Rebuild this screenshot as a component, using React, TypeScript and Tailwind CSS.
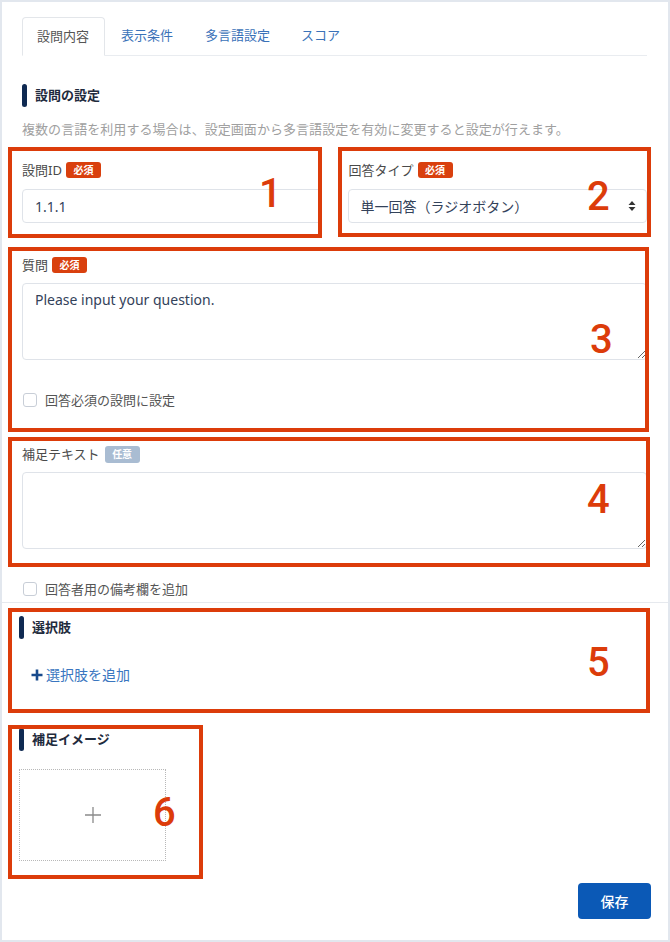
import React from "react";

const RED = "#dc3c0a";

function Badge({ kind }: { kind: "req" | "opt" }) {
  return kind === "req" ? (
    <span className="ml-[4px] inline-flex h-[16px] w-[35px] items-center justify-center rounded-[3px] bg-[#d9400e] text-[10px] font-bold leading-none text-white">
      必須
    </span>
  ) : (
    <span className="ml-[5px] inline-flex h-[17px] w-[35px] items-center justify-center rounded-[3px] bg-[#a9bcd2] text-[10px] font-bold leading-none text-white">
      任意
    </span>
  );
}

function Label({ text, kind }: { text: string; kind: "req" | "opt" }) {
  return (
    <div className="flex h-[16px] items-center text-[13px] leading-none text-[#4a4a4a]">
      <span>{text}</span>
      <Badge kind={kind} />
    </div>
  );
}

function Check({ text }: { text: string }) {
  return (
    <div className="flex h-[16px] items-center">
      <span className="ml-[1px] h-[14px] w-[14px] rounded-[3px] border border-[#c8ced7] bg-white" />
      <span className="ml-[8px] text-[13px] leading-none text-[#555]">{text}</span>
    </div>
  );
}

function Header({ text }: { text: string }) {
  return (
    <div className="flex h-[24px] items-center">
      <span className="h-[23px] w-[5px] rounded-full bg-[#0f2a52]" />
      <span className="ml-[8px] text-[13px] font-bold leading-none text-[#1f2b3d]">{text}</span>
    </div>
  );
}

function Box({ l, t, w, h }: { l: number; t: number; w: number; h: number }) {
  return (
    <div
      className="pointer-events-none absolute border-[4px]"
      style={{ left: l, top: t, width: w, height: h, borderColor: RED }}
    />
  );
}

function Num({ n, l, t }: { n: string; l: number; t: number }) {
  return (
    <div
      className="pointer-events-none absolute font-['Roboto',sans-serif] text-[40px] font-medium leading-none"
      style={{ left: l, top: t, color: RED }}
    >
      {n}
    </div>
  );
}

export default function App() {
  return (
    <div className="relative h-[942px] w-[670px] overflow-hidden bg-white font-['Noto_Sans','Noto_Sans_CJK_JP',sans-serif]">
      <div className="flex h-full flex-col border-2 border-[#e2e7ee]">
        {/* section 1 */}
        <div className="pl-[20px] pr-[21px] pt-[15px]">
          {/* tabs */}
          <div className="flex h-[39px] border-b border-[#e9ecf0] text-[13px]">
            <div className="-mb-px flex items-center rounded-t-[4px] border border-[#e3e6ea] border-b-white bg-white px-[15px] pl-[14px] text-[#555]">
              設問内容
            </div>
            <div className="flex items-center pl-[16px] pr-[16px] text-[#3a72b8]">表示条件</div>
            <div className="flex items-center px-[16px] text-[#3a72b8]">多言語設定</div>
            <div className="flex items-center px-[15px] text-[#3a72b8]">スコア</div>
          </div>

          <div className="mt-[27px]">
            <Header text="設問の設定" />
          </div>
          <div className="mt-[12px] text-[13px] leading-[20px] tracking-[0.05px] text-[#a0a0a0]">
            複数の言語を利用する場合は、設定画面から多言語設定を有効に変更すると設定が行えます。
          </div>

          <div className="mt-[23px] grid grid-cols-2 gap-[26px]">
            <div>
              <Label text="設問ID" kind="req" />
              <div className="mt-[11px] flex h-[34px] items-center rounded-[4px] border border-[#dfe3e9] px-[12px] text-[14px] text-[#33425a]">
                1.1.1
              </div>
            </div>
            <div>
              <div className="pl-[1px]">
                <Label text="回答タイプ" kind="req" />
              </div>
              <div className="mt-[11px] flex h-[34px] items-center justify-between rounded-[4px] border border-[#dfe3e9] pl-[12px] pr-[10px] text-[14px] text-[#33425a]">
                <span>単一回答（ラジオボタン）</span>
                <svg width="8" height="12" viewBox="0 0 8 12">
                  <path d="M4 1 L7.5 5 H0.5 Z" fill="#333" />
                  <path d="M4 11 L7.5 7 H0.5 Z" fill="#333" />
                </svg>
              </div>
            </div>
          </div>

          <div className="mt-[34px]">
            <Label text="質問" kind="req" />
          </div>
          <textarea
            className="mt-[10px] block h-[77px] w-full rounded-[4px] border border-[#dfe3e9] px-[12px] py-[6px] text-[14px] leading-[20px] text-[#33425a] outline-none"
            defaultValue="Please input your question."
          />
          <div className="mt-[32px]">
            <Check text="回答必須の設問に設定" />
          </div>

          <div className="mt-[38px]">
            <Label text="補足テキスト" kind="opt" />
          </div>
          <textarea
            className="mt-[10px] block h-[77px] w-full rounded-[4px] border border-[#dfe3e9] px-[12px] py-[6px] text-[14px] leading-[20px] text-[#33425a] outline-none"
            defaultValue=""
          />
          <div className="mt-[32px]">
            <Check text="回答者用の備考欄を追加" />
          </div>
        </div>

        <div className="mt-[5px] border-t border-[#e6e9ee]" />

        {/* section 2 */}
        <div className="flex flex-col pl-[17px] pr-[17px]">
          <div className="mt-[12px]">
            <Header text="選択肢" />
          </div>
          <div className="mt-[26px] flex h-[20px] items-center pl-[12px]">
            <svg width="12" height="12" viewBox="0 0 12 12">
              <path d="M6 0.5 V11.5 M0.5 6 H11.5" stroke="#184a8c" strokeWidth="2.6" />
            </svg>
            <span className="ml-[3px] text-[14px] leading-none text-[#3a76c0]">選択肢を追加</span>
          </div>

          <div className="mt-[42px]">
            <Header text="補足イメージ" />
          </div>
          <div className="mt-[18px] flex h-[92px] w-[147px] items-center justify-center border border-dotted border-[#b8b8b8]">
            <svg width="18" height="18" viewBox="0 0 18 18">
              <path d="M9 1 V17 M1 9 H17" stroke="#8a8a8a" strokeWidth="1.3" />
            </svg>
          </div>

          <div className="mt-[22px] flex justify-end">
            <button className="flex h-[36px] w-[73px] items-center justify-center rounded-[4px] bg-[#0b59b6] text-[14px] font-medium text-white">
              保存
            </button>
          </div>
        </div>
      </div>

      {/* annotations */}
      <Box l={8} t={147} w={314} h={91} />
      <Box l={338} t={147} w={313} h={90} />
      <Box l={8} t={247} w={641} h={185} />
      <Box l={8} t={437} w={642} h={130} />
      <Box l={8} t={608} w={642} h={105} />
      <Box l={8} t={725} w={195} h={154} />

      <Num n="1" l={259} t={174} />
      <Num n="2" l={587} t={177} />
      <Num n="3" l={590} t={320} />
      <Num n="4" l={587} t={480} />
      <Num n="5" l={587} t={643} />
      <Num n="6" l={153} t={793} />
    </div>
  );
}
